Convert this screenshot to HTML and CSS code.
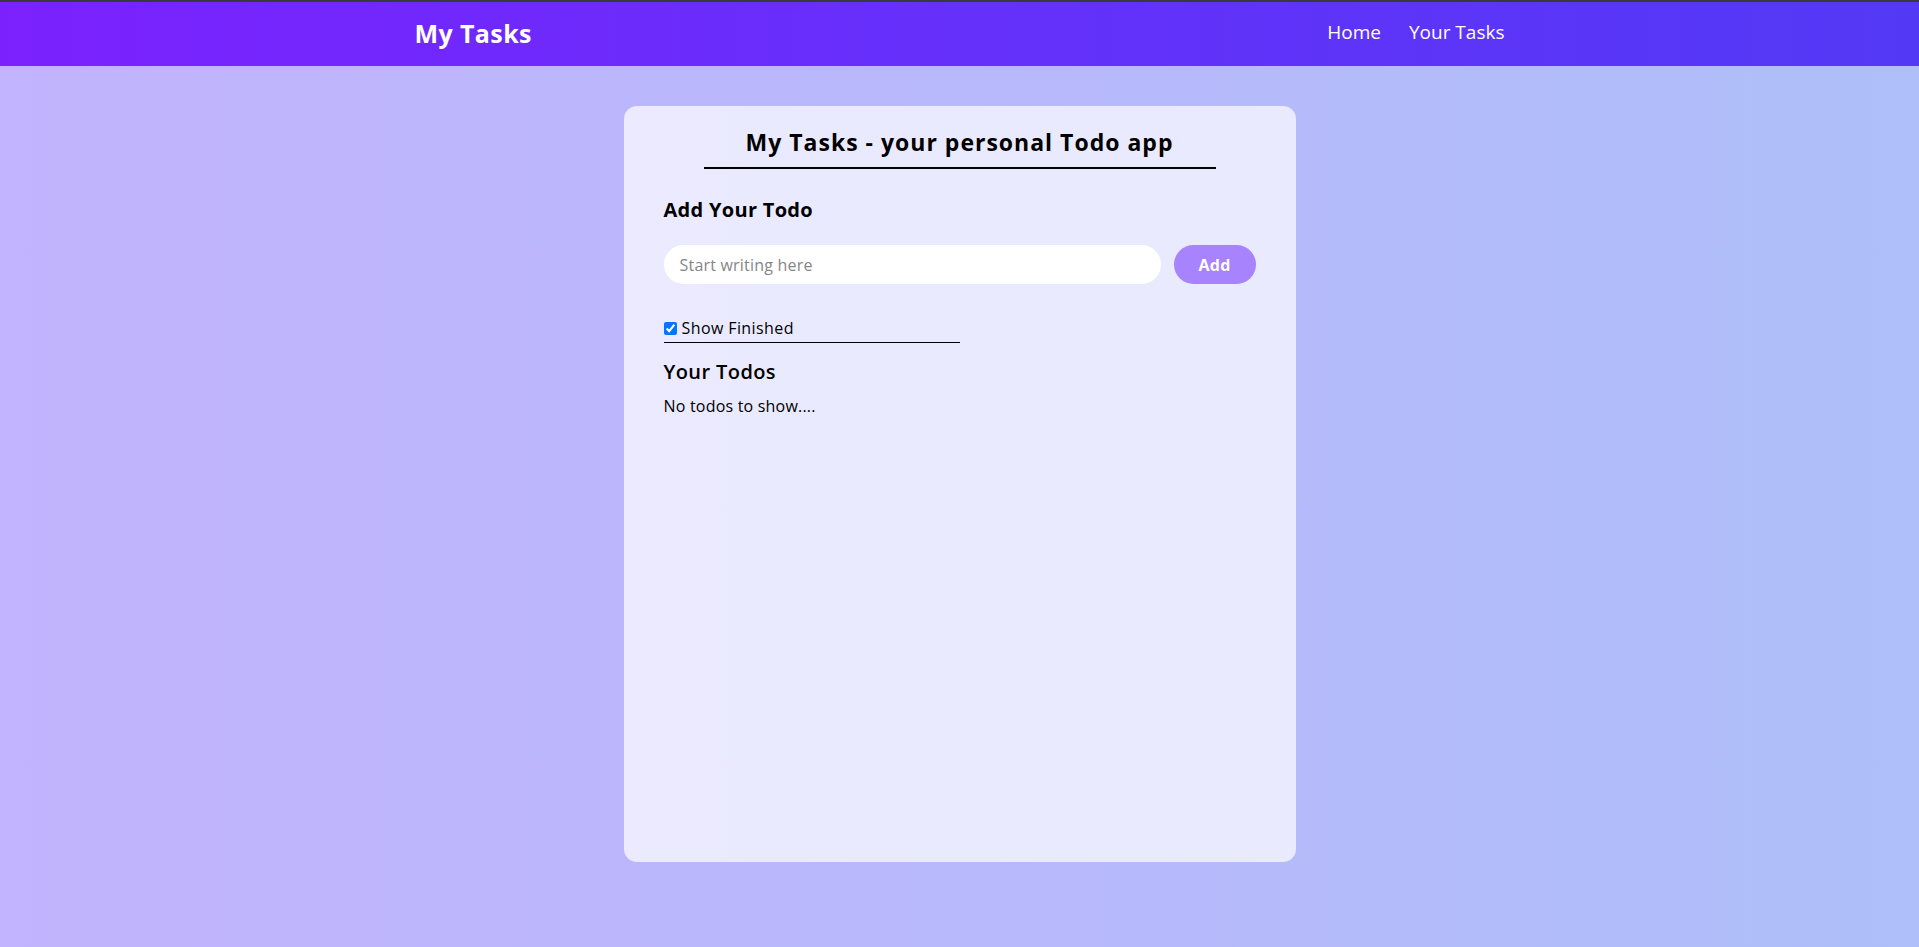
FILE: index.html
```html
<!DOCTYPE html>
<html lang="en">
<head>
<meta charset="utf-8">
<title>My Tasks</title>
<link rel="stylesheet" href="styles.css">
</head>
<body>
  <nav class="navbar">
    <div class="nav-inner">
      <span class="logo">My Tasks</span>
      <ul class="nav-links">
        <li><a href="#">Home</a></li>
        <li><a href="#">Your Tasks</a></li>
      </ul>
    </div>
  </nav>
  <main class="card">
    <h1 class="card-title">My Tasks - your personal Todo app</h1>
    <h2 class="add-title">Add Your Todo</h2>
    <div class="add-row">
      <input class="todo-input" type="text" placeholder="Start writing here">
      <button class="add-btn">Add</button>
    </div>
    <label class="finished">
      <input type="checkbox" class="finished-box" checked>
      <span>Show Finished</span>
    </label>
    <div class="divider"></div>
    <h2 class="list-title">Your Todos</h2>
    <p class="empty">No todos to show....</p>
  </main>
</body>
</html>
```

FILE: styles.css
```css
* { box-sizing: border-box; }

html, body {
  margin: 0;
  padding: 0;
}

body {
  min-height: 947px;
  font-family: "Open Sans", "Noto Sans", sans-serif;
  color: #000;
  background: linear-gradient(to right, #c2b4fe 0%, #b8b8fc 50%, #aebff9 100%);
  padding-bottom: 85px;
}

.navbar {
  height: 66px;
  border-top: 2px solid #3a3a3a;
  background: linear-gradient(to right, #7b21fe 0%, #6530fa 50%, #5339f6 100%);
  color: #fff;
}

.nav-inner {
  width: 1090px;
  height: 100%;
  margin: 0 auto;
  padding-bottom: 3px;
  display: flex;
  align-items: center;
  justify-content: space-between;
}

.logo {
  font-size: 25px;
  font-weight: 700;
  letter-spacing: 0.4px;
}

.nav-links {
  list-style: none;
  margin: 0 0 1px 0;
  padding: 0;
  display: flex;
  gap: 28px;
}

.nav-links a {
  color: #fff;
  text-decoration: none;
  font-size: 19px;
}

.card {
  width: 672px;
  min-height: 756px;
  margin: 40px auto 0;
  padding: 20px 40px 30px;
  border-radius: 13px;
  background: rgba(255, 255, 255, 0.7);
}

.card-title {
  margin: 0 40px;
  padding-bottom: 9px;
  border-bottom: 2px solid #000;
  text-align: center;
  font-size: 23px;
  line-height: 32px;
  font-weight: 700;
  letter-spacing: 1px;
}

.add-title {
  margin: 27px 0 0;
  font-size: 20px;
  line-height: 28px;
  font-weight: 700;
  letter-spacing: 0.3px;
}

.add-row {
  margin-top: 21px;
  display: flex;
  gap: 13px;
}

.todo-input {
  flex: 1;
  height: 39px;
  border: none;
  outline: none;
  border-radius: 20px;
  background: #fff;
  padding: 0 16px;
  font-family: inherit;
  font-size: 16px;
  letter-spacing: 0.2px;
}

.todo-input::placeholder {
  color: #868686;
}

.add-btn {
  width: 82px;
  height: 39px;
  border: none;
  border-radius: 20px;
  background: #a783fd;
  color: #fff;
  font-family: inherit;
  font-size: 16px;
  font-weight: 700;
  letter-spacing: 0.3px;
}

.finished {
  margin-top: 32px;
  display: flex;
  align-items: center;
  height: 24px;
  font-size: 16px;
  line-height: 24px;
  letter-spacing: 0.4px;
}

.finished-box {
  margin: 1px 5px 0 0;
  width: 13px;
  height: 13px;
}

.divider {
  width: 50%;
  height: 1px;
  margin-top: 2px;
  background: #000;
}

.list-title {
  margin: 15px 0 0;
  font-size: 20px;
  line-height: 28px;
  font-weight: 600;
  letter-spacing: 0.4px;
}

.empty {
  margin: 8px 0 0;
  font-size: 16px;
  line-height: 24px;
  letter-spacing: 0.2px;
}
```
